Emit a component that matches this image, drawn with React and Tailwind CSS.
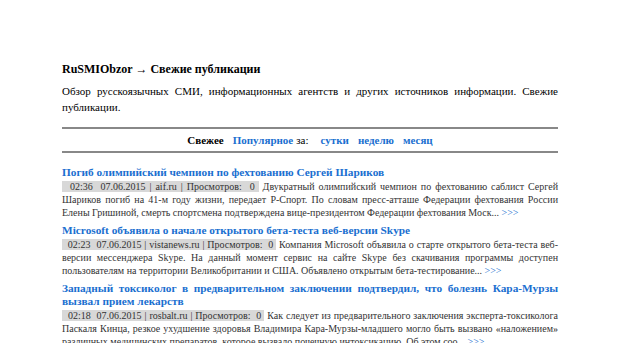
const ARTICLES = [
  {
    title: 'Погиб олимпийский чемпион по фехтованию Сергей Шариков',
    time: '02:36',
    date: '07.06.2015',
    source: 'aif.ru',
    views: 0,
    text: 'Двукратный олимпийский чемпион по фехтованию саблист Сергей Шариков погиб на 41-м году жизни, передает Р-Спорт. По словам пресс-атташе Федерации фехтования России Елены Гришиной, смерть спортсмена подтверждена вице-президентом Федерации фехтования Моск...',
  },
  {
    title: 'Microsoft объявила о начале открытого бета-теста веб-версии Skype',
    time: '02:23',
    date: '07.06.2015',
    source: 'vistanews.ru',
    views: 0,
    text: 'Компания Microsoft объявила о старте открытого бета-теста веб-версии мессенджера Skype. На данный момент сервис на сайте Skype без скачивания программы доступен пользователям на территории Великобритании и США.  Объявлено открытым бета-тестирование...',
  },
  {
    title: 'Западный токсиколог в предварительном заключении подтвердил, что болезнь Кара-Мурзы вызвал прием лекарств',
    time: '02:18',
    date: '07.06.2015',
    source: 'rosbalt.ru',
    views: 0,
    text: 'Как следует из предварительного заключения эксперта-токсиколога Паскаля Кинца, резкое ухудшение здоровья Владимира Кара-Мурзы-младшего могло быть вызвано «наложением» различных медицинских препаратов, которое вызвало почечную интоксикацию.  Об этом соо...',
  },
];

function Article({ a }) {
  return (
    <div className="mb-[5px]">
      <a href="#" className="block text-[11.3px] leading-[13px] font-bold text-[#1a6fd0] text-justify">
        {a.title}
      </a>
      <p className="text-[10px] leading-[13px] text-[#333] text-justify mt-[1px]">
        <span className="bg-[#d8d8d8] whitespace-pre">
          {`  ${a.time}  ${a.date} | ${a.source} | Просмотров:  ${a.views} `}
        </span>{' '}
        {a.text}{' '}
        <a href="#" className="text-[#1a6fd0]">&gt;&gt;&gt;</a>
      </p>
    </div>
  );
}

export default function App() {
  return (
    <div className="min-h-[343px] bg-white font-['Liberation_Serif',serif] text-black overflow-hidden">
      <div className="w-[496px] mx-auto pt-[62px]">
        <h1 className="text-[12px] leading-[14px] font-bold">RuSMIObzor → Свежие публикации</h1>
        <p className="mt-[7px] text-[11px] leading-[16px] text-justify">
          Обзор русскоязычных СМИ, информационных агентств и других источников информации. Свежие публикации.
        </p>

        <div className="mt-[12px] border-t-2 border-b-2 border-[#888] py-[4px] text-center text-[11px] leading-[14px] font-bold">
          <span>Свежее</span>
          <a href="#" className="ml-[9px] text-[#1a6fd0]">Популярное</a>
          <span className="ml-[3px] font-normal">за:</span>
          <a href="#" className="ml-[12px] text-[#1a6fd0]">сутки</a>
          <a href="#" className="ml-[9px] text-[#1a6fd0]">неделю</a>
          <a href="#" className="ml-[9px] text-[#1a6fd0]">месяц</a>
        </div>

        <div className="mt-[13px]">
          {ARTICLES.map((a) => (
            <Article key={a.title} a={a} />
          ))}
        </div>
      </div>
    </div>
  );
}
